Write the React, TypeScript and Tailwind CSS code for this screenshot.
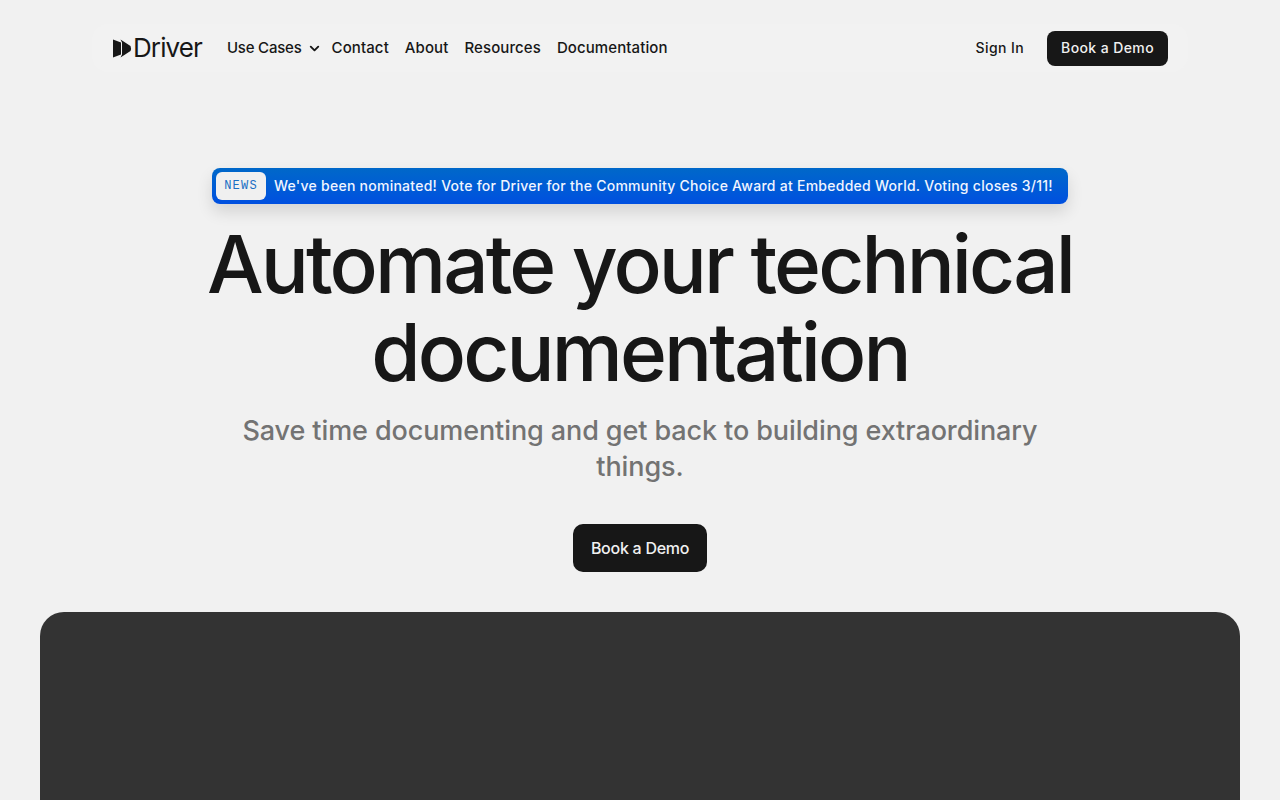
import { ChevronDown } from 'lucide-react';

const navLinks = ['Contact', 'About', 'Resources', 'Documentation'];

function DriverMark() {
  return (
    <svg aria-hidden="true" className="h-[19px] w-[19px]" viewBox="0 0 19 19" fill="#171717">
      <path d="M0 0.5 8 3.5V15.5L0 18.5Z" />
      <path d="M7.5 0.5 17.5 7Q18.5 9.5 17.5 12L7.5 18.5 9 15.5V3.5Z" />
    </svg>
  );
}

function Header() {
  return (
    <header className="mx-auto flex h-12 w-[1096px] items-center justify-between rounded-2xl bg-[#f2f2f2] pl-[21px] pr-5">
      <div className="flex items-center">
        <a className="flex items-center gap-px pr-[25px]">
          <DriverMark />
          <span className="text-[26px] leading-none tracking-[-0.9px] text-[#171717]">Driver</span>
        </a>
        <nav className="flex items-center gap-4 pt-px text-[15px] font-medium tracking-[0.1px] text-[#171717]">
          <a className="-mr-1.5 flex items-center gap-[5px] tracking-[-0.2px]">
            Use Cases
            <ChevronDown className="h-[15px] w-[15px]" strokeWidth={3} />
          </a>
          {navLinks.map((link) => (
            <a key={link}>{link}</a>
          ))}
        </nav>
      </div>
      <div className="flex items-center gap-[23px] text-[14px] font-medium tracking-[0.4px]">
        <a className="pb-px text-[#171717]">Sign In</a>
        <a className="flex h-[35px] items-center rounded-lg bg-[#171717] px-[14px] pb-px text-[#f0f0f0]">Book a Demo</a>
      </div>
    </header>
  );
}

export default function App() {
  return (
    <div className="h-screen overflow-hidden bg-[#f1f1f1] pt-6 font-['Inter',sans-serif]">
      <Header />
      <main className="flex flex-col items-center pt-24">
        <div className="flex h-9 w-[856px] items-center gap-2 rounded-lg bg-gradient-to-b from-[#0068c9] to-[#004fe0] pl-1 shadow-[0_8px_16px_rgba(0,0,0,0.12)]">
          <span className="flex h-7 w-[50px] items-center justify-center rounded-md bg-[#f0f0f0] font-['Liberation_Mono',monospace] text-xs tracking-[1.2px] text-[#1a6fc4]">
            NEWS
          </span>
          <span className="text-sm font-medium tracking-[0.26px] text-[#f0f5ff]">
            We've been nominated! Vote for Driver for the Community Choice Award at Embedded World. Voting closes 3/11!
          </span>
        </div>
        <h1 className="mt-[16px] w-[1000px] text-center text-[80px] leading-[88px] font-medium tracking-[-2.9px] text-[#171717]">
          Automate your technical documentation
        </h1>
        <p className="mt-[17px] w-[820px] text-center text-[27px] leading-9 font-medium tracking-[-0.1px] text-[#737373]">
          Save time documenting and get back to building extraordinary things.
        </p>
        <a className="mt-[39px] flex h-12 w-[134px] items-center justify-center rounded-[10px] bg-[#171717] pb-px text-base font-medium tracking-[-0.27px] text-[#f0f0f0]">
          Book a Demo
        </a>
        <div className="mt-10 h-[600px] w-[1200px] rounded-3xl bg-[#333333]" />
      </main>
    </div>
  );
}
